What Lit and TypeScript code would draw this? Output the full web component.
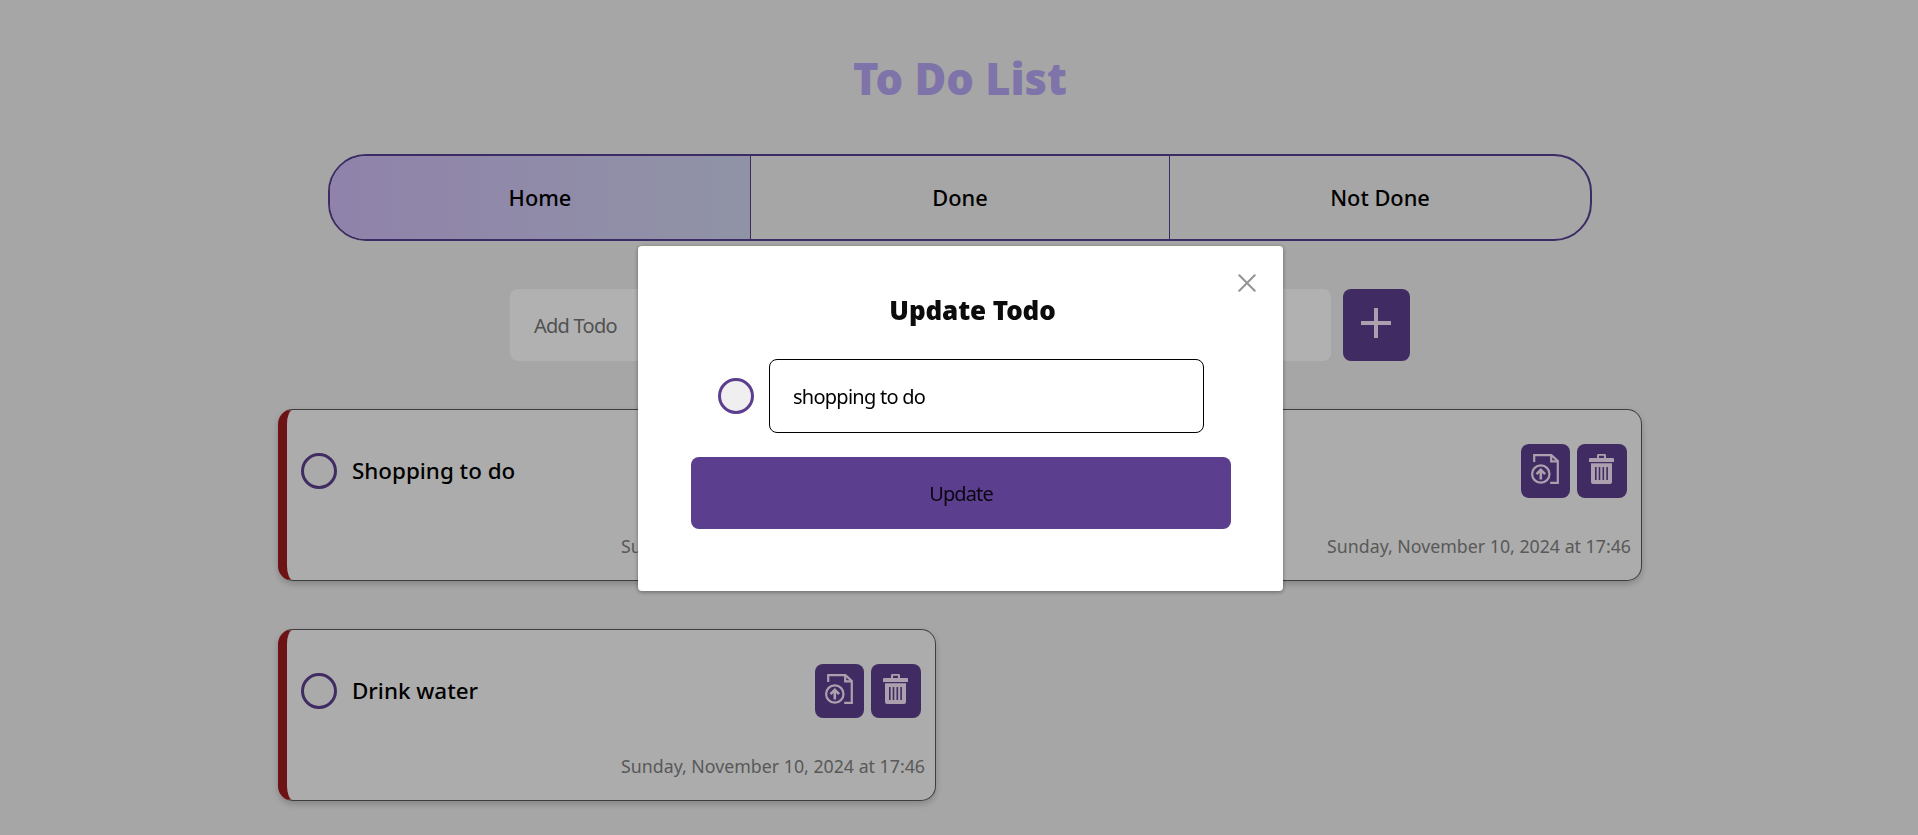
import { LitElement, html, css } from "lit";
import { customElement, property } from "lit/decorators.js";

const updateIcon = html`<svg width="28" height="30" viewBox="0 0 28 30" fill="none" stroke="#f6e6fa" stroke-width="2.2">
  <path d="M3.2 8V1.1H20.4l6.4 5.8V28.9H19.2" />
  <path d="M20.2 1v6.4h6.6" />
  <circle cx="9.8" cy="20" r="8.7" />
  <path d="M9.8 25.6V16.4M5.5 20.1l4.3-4.3 4.3 4.3" stroke-width="2.6" />
</svg>`;

const trashIcon = html`<svg width="25" height="30" viewBox="0 0 25 30" fill="#f6e6fa" fill-rule="evenodd">
  <path d="M1 4H8V1.4Q8 0 9.4 0H15.6Q17 0 17 1.4V4H24Q25 4 25 5V8H0V5Q0 4 1 4ZM10 1.8V4h5V1.8Z" />
  <path d="M2 9.2H23V28Q23 30 21 30H4Q2 30 2 28ZM6 13V26H7.6V13ZM9.7 13V26H11.3V13ZM13.5 13V26H15.1V13ZM17.3 13V26H18.9V13Z" />
</svg>`;

@customElement("todo-card")
export class TodoCard extends LitElement {
  @property() label = "";
  @property() date = "";

  static styles = css`
    :host {
      display: flex;
      flex-direction: column;
      box-sizing: border-box;
      height: 172px;
      padding: 34px 14px 0;
      border: 1px solid #5a5a5a;
      border-left: 9px solid #9c1c20;
      border-radius: 15px;
      background: #f7f7f7;
      box-shadow: 0 3px 6px rgba(0, 0, 0, 0.2);
    }
    .row { display: flex; align-items: center; height: 54px; }
    .check {
      width: 36px;
      height: 36px;
      box-sizing: border-box;
      border: 3px solid #5c3e8e;
      border-radius: 50%;
      background: #f4f4f4;
    }
    .label { flex: 1; margin-left: 15px; padding-bottom: 2px; font: 500 22.4px "Noto Sans", sans-serif; color: #000; }
    .btn {
      display: flex;
      align-items: flex-start;
      box-sizing: border-box;
      width: 49px;
      height: 54px;
      padding: 10px 0 0 10px;
      border-radius: 8px;
      background: #5c3e8e;
    }
    .btn.trash { width: 50px; margin-left: 7px; padding-left: 12px; }
    .date {
      margin: 36px -4px 0 0;
      font: 400 17.75px/24px "Noto Sans", sans-serif;
      color: #808080;
      text-align: right;
      white-space: nowrap;
    }
  `;

  render() {
    return html`
      <div class="row">
        <span class="check"></span>
        <span class="label">${this.label}</span>
        <span class="btn">${updateIcon}</span>
        <span class="btn trash">${trashIcon}</span>
      </div>
      <div class="date">${this.date}</div>
    `;
  }
}

@customElement("app-root")
export class AppRoot extends LitElement {
  static styles = css`
    :host {
      display: block;
      box-sizing: border-box;
      height: 835px;
      padding-top: 49px;
      overflow: hidden;
      background: #eeeeee;
      font-family: "Noto Sans", sans-serif;
      color: #000;
    }
    h1, h2 { margin: 0; text-align: center; font-weight: 900; }
    h1 { padding-left: 2px; font-size: 43.4px; line-height: 60px; color: #b6a6f3; }
    .tabs {
      display: grid;
      grid-template-columns: 421px 419px 1fr;
      box-sizing: border-box;
      width: 1264px;
      height: 87px;
      margin: 45px 0 0 328px;
      border: 2px solid #573f92;
      border-radius: 38px;
      overflow: hidden;
    }
    .tab {
      display: flex;
      align-items: center;
      justify-content: center;
      border-right: 1px solid #573f92;
      font-size: 21.8px;
      font-weight: 500;
    }
    .tab:last-child { border-right: 0; }
    .tab.active { background: linear-gradient(to right, #cfbbf5, #ced3ee); }
    .add { display: flex; gap: 12px; margin: 48px 0 0 510px; }
    .field {
      display: flex;
      align-items: center;
      box-sizing: border-box;
      width: 821px;
      height: 72px;
      padding-left: 24px;
      border-radius: 8px;
      background: #fefefe;
      font-size: 20px;
      letter-spacing: -0.75px;
      color: #757575;
    }
    .plus {
      display: flex;
      box-sizing: border-box;
      width: 67px;
      height: 72px;
      padding: 19px 0 0 18px;
      border-radius: 8px;
      background: #5c3e8e;
    }
    .cards {
      display: grid;
      grid-template-columns: 658px 658px;
      gap: 48px;
      margin: 48px 0 0 278px;
    }
    .overlay {
      position: fixed;
      inset: 0;
      display: flex;
      align-items: flex-start;
      justify-content: center;
      padding: 246px 0 0 3px;
      background: rgba(0, 0, 0, 0.3);
    }
    .modal {
      position: relative;
      box-sizing: border-box;
      width: 645px;
      height: 345px;
      padding: 46px 52px 0 53px;
      border-radius: 4px;
      background: #fff;
      box-shadow: 0 1px 4px rgba(0, 0, 0, 0.4);
    }
    .close { position: absolute; top: 28px; right: 27px; }
    h2 { padding-left: 23px; font-size: 26px; letter-spacing: -0.1px; line-height: 36px; color: #0c0c0c; }
    .edit { display: flex; align-items: center; gap: 15px; margin: 31px 0 0 27px; }
    .check {
      box-sizing: border-box;
      width: 36px;
      height: 36px;
      border: 3px solid #5c3e8e;
      border-radius: 50%;
      background: #efefef;
    }
    .edit .field {
      width: 435px;
      height: 74px;
      padding-left: 23px;
      border: 1px solid #000;
      background: #fff;
      color: #000;
    }
    .submit {
      display: flex;
      align-items: center;
      justify-content: center;
      height: 72px;
      margin-top: 24px;
      border-radius: 8px;
      background: #5c3e8e;
      font-size: 20px;
      letter-spacing: -0.9px;
      color: #0b0611;
    }
    svg { display: block; }
  `;

  private todos = ["Shopping to do", "", "Drink water"];

  render() {
    return html`
      <h1>To Do List</h1>
      <nav class="tabs">
        <span class="tab active">Home</span>
        <span class="tab">Done</span>
        <span class="tab">Not Done</span>
      </nav>
      <div class="add">
        <div class="field">Add Todo</div>
        <div class="plus">
          <svg width="30" height="30" viewBox="0 0 30 30" fill="#f6e6fa"><path d="M13 0h4v13h13v4H17v13h-4V17H0v-4h13z" /></svg>
        </div>
      </div>
      <div class="cards">
        ${this.todos.map((label) => html`<todo-card label=${label} date="Sunday, November 10, 2024 at 17:46"></todo-card>`)}
      </div>
      <div class="overlay">
        <div class="modal">
          <svg class="close" width="18" height="18" viewBox="0 0 18 18" fill="none" stroke="#959595" stroke-width="2.1" stroke-linecap="round"><path d="M1.3 1.3l15.4 15.4M16.7 1.3L1.3 16.7" /></svg>
          <h2>Update Todo</h2>
          <div class="edit">
            <span class="check"></span>
            <div class="field">shopping to do</div>
          </div>
          <div class="submit">Update</div>
        </div>
      </div>
    `;
  }
}
